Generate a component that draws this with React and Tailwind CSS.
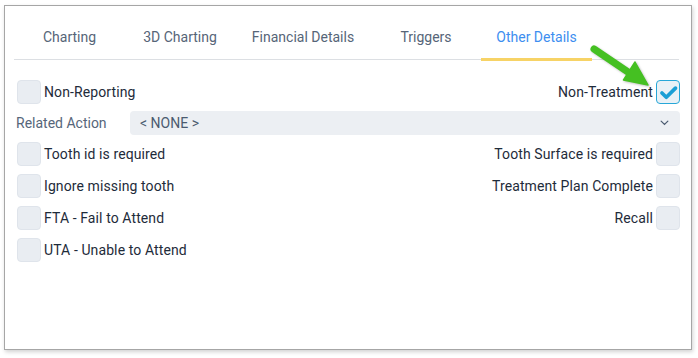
const TABS = [
  { label: 'Charting', w: 'w-[111px]' },
  { label: '3D Charting', w: 'w-[110px]' },
  { label: 'Financial Details', w: 'w-[136px]' },
  { label: 'Triggers', w: 'w-[110px]' },
  { label: 'Other Details', w: 'w-[111px]', active: true },
]

function Box({ checked }) {
  if (checked) {
    return (
      <span className="flex h-6 w-6 shrink-0 items-center justify-center rounded-[4px] border-[1.5px] border-[#27a7d8] bg-[#e9f1f6]">
        <svg viewBox="0 0 24 24" className="h-[21px] w-[21px]" fill="none" aria-hidden="true">
          <path
            d="M4.5 12.5l5 5L20 7"
            stroke="#1b9fd5"
            strokeWidth="4.2"
            strokeLinecap="round"
            strokeLinejoin="round"
          />
        </svg>
      </span>
    )
  }
  return <span className="h-6 w-6 shrink-0 rounded-[4px] border border-[#dfe4eb] bg-[#e9edf2]" />
}

function Left({ label }) {
  return (
    <div className="flex items-center gap-[3px]">
      <Box />
      <span className="text-[14px] tracking-[0.1px] text-[#1e2b3a]">{label}</span>
    </div>
  )
}

function Right({ label, checked }) {
  return (
    <div className="flex items-center gap-[3px]">
      <span className="text-[14px] tracking-[0.1px] text-[#1e2b3a]">{label}</span>
      <Box checked={checked} />
    </div>
  )
}

export default function App() {
  return (
    <div className="h-[358px] w-[698px] bg-white pl-[4px] pt-[5px] font-['Roboto','Liberation_Sans',sans-serif]">
      <div className="relative h-[345px] w-[688px] border border-[#a6a6a6] bg-white shadow-[1px_2px_4px_rgba(0,0,0,0.18)]">
        {/* tab strip */}
        <div className="ml-[9px] mr-[12px] flex h-[54px] border-b border-[#dcdfe3]">
          {TABS.map((t) => (
            <div
              key={t.label}
              className={`${t.w} relative flex items-center justify-center text-[14px] ${
                t.active ? 'text-[#3d8ef0]' : 'text-[#566578]'
              }`}
            >
              <span className="mt-[9px]">{t.label}</span>
              {t.active && <span className="absolute bottom-[-2px] left-0 right-0 h-[3px] bg-[#f7d366]" />}
            </div>
          ))}
        </div>

        <div className="flex flex-col pl-[12px] pr-[11px] pt-[20px]">
          <div className="flex items-center justify-between">
            <Left label="Non-Reporting" />
            <Right label="Non-Treatment" checked />
          </div>

          <div className="mt-[7px] flex h-6 items-center">
            <span className="-ml-px w-[114px] text-[14px] text-[#56667a]">Related Action</span>
            <div className="flex h-6 flex-1 items-center justify-between rounded-[4px] bg-[#eceff3] pl-[10px] pr-[10px]">
              <span className="text-[14px] text-[#4b5b70]">&lt; NONE &gt;</span>
              <svg viewBox="0 0 12 8" className="h-[6px] w-[11px]" fill="none" aria-hidden="true">
                <path d="M1.5 1.5L6 6l4.5-4.5" stroke="#4b5b70" strokeWidth="1.6" strokeLinecap="round" />
              </svg>
            </div>
          </div>

          <div className="mt-[7px] flex flex-col gap-2">
            <div className="flex items-center justify-between">
              <Left label="Tooth id is required" />
              <Right label="Tooth Surface is required" />
            </div>
            <div className="flex items-center justify-between">
              <Left label="Ignore missing tooth" />
              <Right label="Treatment Plan Complete" />
            </div>
            <div className="flex items-center justify-between">
              <Left label="FTA - Fail to Attend" />
              <Right label="Recall" />
            </div>
            <div className="flex items-center justify-between">
              <Left label="UTA - Unable to Attend" />
            </div>
          </div>
        </div>

        {/* callout arrow */}
        <svg
          viewBox="0 0 70 50"
          className="absolute left-[583px] top-[39px] h-[50px] w-[70px] drop-shadow-[1px_1px_1px_rgba(0,0,0,0.25)]"
          aria-hidden="true"
        >
          <path d="M6 4L40 27" stroke="#45c022" strokeWidth="7" strokeLinecap="round" />
          <path d="M35.5 35L47 17L60 40z" fill="#45c022" stroke="#45c022" strokeWidth="1.5" strokeLinejoin="round" />
        </svg>
      </div>
    </div>
  )
}
